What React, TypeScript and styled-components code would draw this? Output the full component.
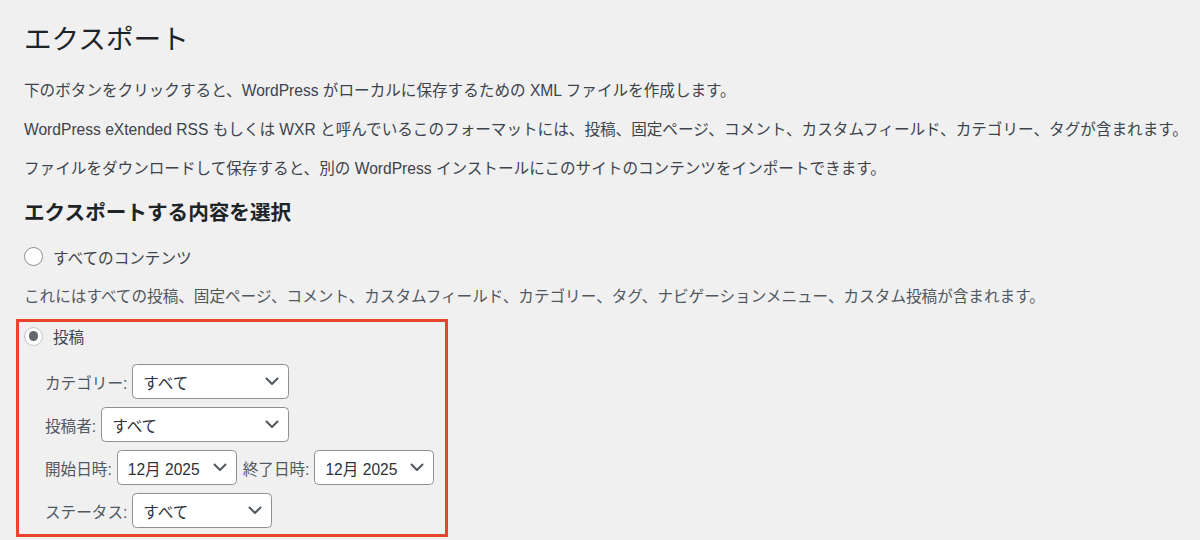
import React from 'react';
import styled, { createGlobalStyle } from 'styled-components';

const GlobalStyle = createGlobalStyle`
  html, body {
    margin: 0;
    padding: 0;
    background: #f0f0f1;
  }
  body {
    font-family: "Liberation Sans", "Noto Sans CJK JP", sans-serif;
    color: #3c434a;
  }
`;

const Page = styled.div`
  padding: 22px 24px 0;
  width: 1200px;
  height: 540px;
  box-sizing: border-box;
  overflow: hidden;
`;

const Title = styled.h1`
  margin: 0 0 21px;
  font-size: 27.6px;
  line-height: 36px;
  font-weight: 400;
  color: #1d2327;
`;

const Para = styled.p`
  margin: 0 0 15.4px;
  font-size: 15.6px;
  line-height: 23.4px;
  color: #3c434a;
  white-space: nowrap;
`;

const SubTitle = styled.h2`
  margin: 19px 0 17px;
  font-size: 20.6px;
  line-height: 28.8px;
  font-weight: 700;
  color: #1d2327;
`;

const RadioRow = styled.label`
  display: flex;
  align-items: center;
  gap: 10px;
  height: 24px;
  font-size: 15.6px;
  color: #3c434a;
`;

const Radio = styled.span<{ $checked?: boolean }>`
  position: relative;
  width: 19px;
  height: 19px;
  box-sizing: border-box;
  border-radius: 50%;
  border: 1.2px solid ${p => (p.$checked ? '#c3c4c7' : '#8c8f94')};
  background: #fff;
  flex: none;

  &::after {
    content: '';
    display: ${p => (p.$checked ? 'block' : 'none')};
    position: absolute;
    left: 50%;
    top: 50%;
    width: 9.6px;
    height: 9.6px;
    margin: -4.8px 0 0 -4.8px;
    border-radius: 50%;
    background: #646970;
  }
`;

const Description = styled.p`
  margin: 16px 0 11px;
  font-size: 15.6px;
  line-height: 23.4px;
  color: #50575e;
  white-space: nowrap;
`;

const Highlight = styled.div`
  margin-left: -8px;
  width: 432px;
  box-sizing: border-box;
  border: 3px solid #e8442c;
  padding: 2px 5px 6px;
`;

const Filters = styled.ul`
  list-style: none;
  margin: 16px 0 0 21px;
  padding: 0;
  display: flex;
  flex-direction: column;
  gap: 8px;
`;

const FilterRow = styled.li`
  display: flex;
  align-items: center;
  gap: 5px;
  font-size: 15.6px;
  color: #50575e;
`;

const SelectBox = styled.div<{ $width: number }>`
  display: flex;
  align-items: center;
  justify-content: space-between;
  width: ${p => p.$width}px;
  height: 35px;
  box-sizing: border-box;
  padding: 0 9px 0 10px;
  background: #fff;
  border: 1.2px solid #8c8f94;
  border-radius: 4.5px;
  font-size: 15.6px;
  color: #2c3338;
`;

const SecondLabel = styled.span`
  margin-left: 1px;
`;

const Chevron = () => (
  <svg width="14" height="9" viewBox="0 0 14 9" fill="none">
    <path d="M1.5 1.5 L7 7 L12.5 1.5" stroke="#50575e" strokeWidth="2" strokeLinecap="round" strokeLinejoin="round" />
  </svg>
);

const Select = ({ value, width }: { value: string; width: number }) => (
  <SelectBox $width={width}>
    <span>{value}</span>
    <Chevron />
  </SelectBox>
);

export default function App() {
  return (
    <>
      <GlobalStyle />
      <Page>
        <Title>エクスポート</Title>
        <Para>下のボタンをクリックすると、WordPress がローカルに保存するための XML ファイルを作成します。</Para>
        <Para>WordPress eXtended RSS もしくは WXR と呼んでいるこのフォーマットには、投稿、固定ページ、コメント、カスタムフィールド、カテゴリー、タグが含まれます。</Para>
        <Para>ファイルをダウンロードして保存すると、別の WordPress インストールにこのサイトのコンテンツをインポートできます。</Para>
        <SubTitle>エクスポートする内容を選択</SubTitle>
        <RadioRow>
          <Radio />
          すべてのコンテンツ
        </RadioRow>
        <Description>これにはすべての投稿、固定ページ、コメント、カスタムフィールド、カテゴリー、タグ、ナビゲーションメニュー、カスタム投稿が含まれます。</Description>
        <Highlight>
          <RadioRow>
            <Radio $checked />
            投稿
          </RadioRow>
          <Filters>
            <FilterRow>
              カテゴリー:
              <Select value="すべて" width={157} />
            </FilterRow>
            <FilterRow>
              投稿者:
              <Select value="すべて" width={188} />
            </FilterRow>
            <FilterRow>
              開始日時:
              <Select value="12月 2025" width={120} />
              <SecondLabel>終了日時:</SecondLabel>
              <Select value="12月 2025" width={120} />
            </FilterRow>
            <FilterRow>
              ステータス:
              <Select value="すべて" width={140} />
            </FilterRow>
          </Filters>
        </Highlight>
      </Page>
    </>
  );
}
